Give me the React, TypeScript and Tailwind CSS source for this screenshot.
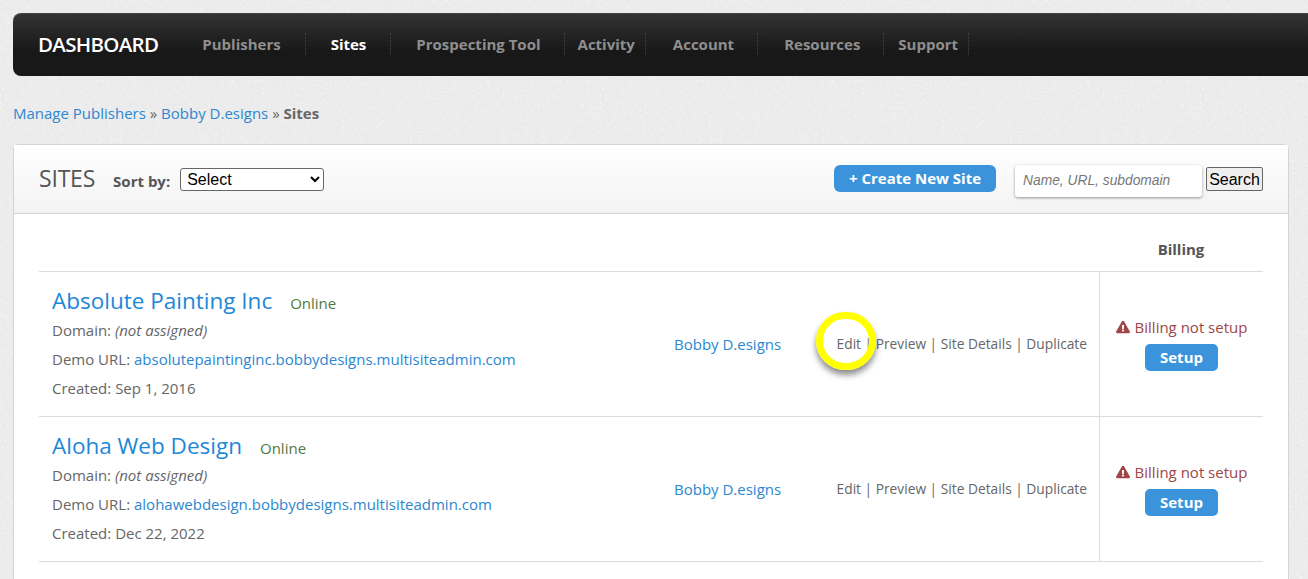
import { FaExclamationTriangle } from "react-icons/fa";

const NAV_ITEMS = [
  { label: "Publishers", className: "pl-[44px] pr-[24px]" },
  { label: "Sites", active: true, className: "pl-[25px] pr-[24px]" },
  { label: "Prospecting Tool", className: "pl-[25px] pr-[23px]" },
  { label: "Activity", className: "pl-[13px] pr-[10px]" },
  { label: "Account", className: "pl-[27px] pr-[23px]" },
  { label: "Resources", className: "pl-[26px] pr-[23px]" },
  { label: "Support", className: "pl-[14px] pr-[10px]" },
];

const SITES = [
  {
    name: "Absolute Painting Inc",
    url: "absolutepaintinginc.bobbydesigns.multisiteadmin.com",
    created: "Sep 1, 2016",
    highlight: true,
  },
  {
    name: "Aloha Web Design",
    url: "alohawebdesign.bobbydesigns.multisiteadmin.com",
    created: "Dec 22, 2022",
  },
];

function SiteRow({ site }: { site: (typeof SITES)[number] }) {
  return (
    <div className="flex h-[145px] border-b border-[#dcdcdc]">
      <div className="w-[635px] pl-[13px] pt-[12px]">
        <div className="flex items-baseline">
          <a className="text-[22.5px] leading-[33px] text-[#1e87d8]">{site.name}</a>
          <span className="ml-[18px] text-[15px] text-[#4f7a3f]">Online</span>
        </div>
        <div className="mt-[-1px] text-[15px] leading-[29px] text-[#666]">
          <p>
            Domain: <em>(not assigned)</em>
          </p>
          <p>
            Demo URL: <a className="text-[#2b87d1]">{site.url}</a>
          </p>
          <p>Created: {site.created}</p>
        </div>
      </div>
      <div className="flex w-[163px] items-center">
        <a className="text-[15px] text-[#2b87d1]">Bobby D.esigns</a>
      </div>
      <div className="relative flex w-[262px] items-center justify-end pr-[12px] text-[13.75px] text-[#666]">
        {site.highlight && (
          <span className="absolute left-[-21px] top-[40px] h-[58px] w-[60px] rounded-full border-[7px] border-[#ffff00] shadow-[0_5px_6px_rgba(0,0,0,0.45)]" />
        )}
        <span className="whitespace-nowrap">Edit | Preview | Site Details | Duplicate</span>
      </div>
      <div className="flex flex-1 flex-col items-center border-l border-[#dcdcdc] pt-[44px]">
        <span className="flex items-center gap-[5px] text-[15px] leading-[22px] text-[#a04646]">
          <FaExclamationTriangle size={14} />
          Billing not setup
        </span>
        <button className="mt-[6px] h-[27px] w-[73px] rounded-[5px] bg-[#3b94db] text-[15px] font-bold text-white">
          Setup
        </button>
      </div>
    </div>
  );
}

export default function App() {
  return (
    <div className="h-[579px] overflow-hidden bg-[#ebebeb] bg-[url('data:image/svg+xml,%3Csvg%20xmlns=%22http://www.w3.org/2000/svg%22%20width=%22300%22%20height=%22300%22%3E%3Cfilter%20id=%22n%22%3E%3CfeTurbulence%20baseFrequency=%22.4%22%20numOctaves=%223%22/%3E%3CfeColorMatrix%20values=%220%200%200%200%201%200%200%200%200%201%200%200%200%200%201%200%200%200%201.2%20-.4%22/%3E%3C/filter%3E%3Crect%20width=%22300%22%20height=%22300%22%20filter=%22url(%23n)%22/%3E%3C/svg%3E')] pl-[13px] pt-[13px] font-['Open_Sans',sans-serif]">
      {/* Top nav */}
      <div className="flex h-[63px] items-center rounded-l-[8px] border-t border-[#444] bg-gradient-to-b from-[#333] to-[#181818] to-60% pl-[25px]">
        <span className="mt-[-1px] text-[20.5px] font-semibold tracking-[-0.7px] text-white">DASHBOARD</span>
        {NAV_ITEMS.map((item) => (
          <span
            key={item.label}
            className={`mt-[-2px] flex h-[22px] items-center border-r border-dotted border-[#444] text-[15px] font-bold ${item.className} ${item.active ? "text-white" : "text-[#8f8f8f]"}`}
          >
            {item.label}
          </span>
        ))}
      </div>

      {/* Breadcrumb */}
      <div className="mt-[26px] text-[15px] leading-[22px] text-[#666]">
        <a className="text-[#2b87d1]">Manage Publishers</a> »{" "}
        <a className="text-[#2b87d1]">Bobby D.esigns</a> » <b>Sites</b>
      </div>

      {/* Sites card */}
      <div className="mr-[19px] mt-[20px] h-[500px] rounded-t-[6px] border border-[#d4d4d4] bg-white">
        <div className="flex h-[69px] items-center border-b border-[#d4d4d4] bg-gradient-to-b from-white to-[#f3f3f3] pl-[25px] pr-[25px]">
          <span className="mt-[-1px] text-[23px] tracking-[-0.2px] text-[#555]">SITES</span>
          <span className="ml-[18px] mt-[4px] text-[15px] font-bold text-[#555]">Sort by:</span>
          <select className="ml-[10px] h-[23px] w-[144px] rounded-[3px] border border-[#666] bg-white pl-[2px] font-['Liberation_Sans',sans-serif] text-[16px] text-black">
            <option>Select</option>
          </select>
          <button className="mb-[2px] ml-auto h-[27px] w-[162px] rounded-[6px] bg-[#3b94db] text-[15px] font-bold text-white">
            + Create New Site
          </button>
          <input
            placeholder="Name, URL, subdomain"
            className="ml-[19px] mt-[3px] h-[32px] w-[187px] rounded-[3px] bg-white px-[8px] font-['Liberation_Sans',sans-serif] text-[13.8px] italic shadow-[0_1px_3px_rgba(0,0,0,0.4)] placeholder:text-[#777]"
          />
          <button className="ml-[4px] h-[24px] w-[57px] rounded-[2px] border border-[#666] bg-[#efefef] font-['Liberation_Sans',sans-serif] text-[16px] text-black">
            Search
          </button>
        </div>

        <div className="px-[25px]">
          <div className="flex h-[58px] items-center justify-end border-b border-[#dcdcdc] pt-[14px]">
            <span className="w-[164px] text-center text-[15px] font-bold text-[#555]">Billing</span>
          </div>
          {SITES.map((site) => (
            <SiteRow key={site.name} site={site} />
          ))}
        </div>
      </div>
    </div>
  );
}
